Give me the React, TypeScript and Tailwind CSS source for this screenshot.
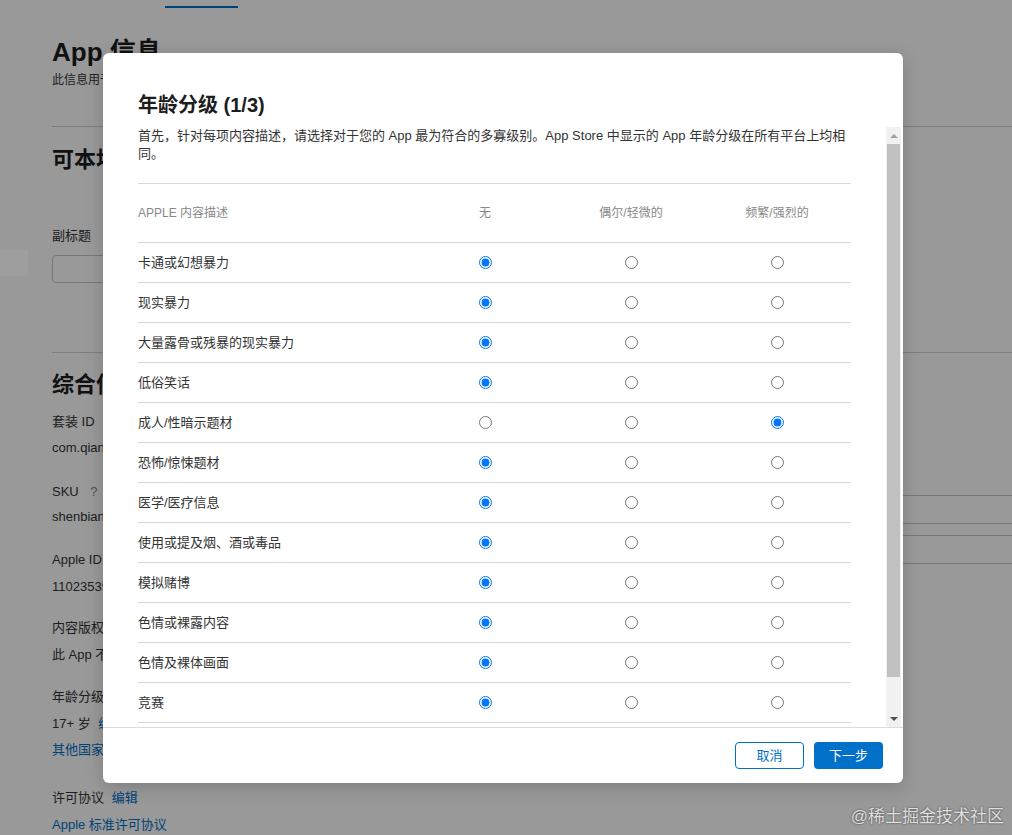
const rows: [string, number][] = [
  ['卡通或幻想暴力', 0],
  ['现实暴力', 0],
  ['大量露骨或残暴的现实暴力', 0],
  ['低俗笑话', 0],
  ['成人/性暗示题材', 2],
  ['恐怖/惊悚题材', 0],
  ['医学/医疗信息', 0],
  ['使用或提及烟、酒或毒品', 0],
  ['模拟赌博', 0],
  ['色情或裸露内容', 0],
  ['色情及裸体画面', 0],
  ['竞赛', 0],
];

const levels = ['无', '偶尔/轻微的', '频繁/强烈的'];

const Field = ({ label, value, top, gap }: { label: React.ReactNode; value: React.ReactNode; top: string; gap: string }) => (
  <div className={top}>
    <p className="text-[13px] leading-[18px]">{label}</p>
    <p className={`${gap} text-[13px] leading-[18px]`}>{value}</p>
  </div>
);

const Page = () => (
  <div className="w-full">
    <div className="flex h-[8px] items-end bg-white pl-[165px]">
      <div className="h-[2px] w-[73px] bg-[#0070c9]" />
    </div>
    <div className="pl-[52px]">
      <h1 className="mt-[28px] text-[26px] font-semibold leading-[32px]">App 信息</h1>
      <p className="mt-[4px] text-[12px] leading-[16px] text-[#333]">此信息用于所有平台上的 App。</p>
      <div className="mt-[38px] border-t border-[#d2d2d7]" />
      <h2 className="mt-[19px] text-[22px] font-semibold leading-[28px]">可本地化信息</h2>
      <p className="mt-[53px] text-[13px] leading-[18px] text-[#333]">副标题</p>
      <div className="mt-[10px] h-[28px] w-[400px] rounded-[4px] border border-[#c8c8cc]" />
      <div className="mt-[69px] border-t border-[#d2d2d7]" />
      <h2 className="mt-[18px] text-[22px] font-semibold leading-[28px]">综合信息</h2>
      <div className="flex">
        <div className="w-[440px] text-[#333]">
          <Field top="mt-[14px]" gap="mt-[8px]" label="套装 ID" value="com.qianmo.shenbian" />
          <Field
            top="mt-[26px]"
            gap="mt-[7px]"
            label={
              <>
                SKU <span className="ml-[8px] text-[#888]">?</span>
              </>
            }
            value="shenbianapp"
          />
          <Field top="mt-[25px]" gap="mt-[9px]" label="Apple ID" value="1102353987" />
          <Field top="mt-[23px]" gap="mt-[9px]" label="内容版权" value="此 App 不含第三方内容。" />
          <Field
            top="mt-[24px]"
            gap="mt-[9px]"
            label="年龄分级"
            value={
              <>
                17+ 岁 <span className="ml-[4px] text-[#0070c9]">编辑</span>
              </>
            }
          />
          <p className="mt-[8px] text-[13px] leading-[18px] text-[#0070c9]">其他国家或地区的年龄分级</p>
          <p className="mt-[30px] text-[13px] leading-[18px]">
            许可协议 <span className="ml-[4px] text-[#0070c9]">编辑</span>
          </p>
          <p className="mt-[9px] text-[13px] leading-[18px] text-[#0070c9]">Apple 标准许可协议</p>
        </div>
        <div className="flex-1">
          <div className="mt-[96px] h-[29px] rounded-l-[4px] border border-r-0 border-[#c8c8cc]" />
          <div className="mt-[11px] h-[29px] rounded-l-[4px] border border-r-0 border-[#c8c8cc]" />
        </div>
      </div>
    </div>
  </div>
);

const ScrollBar = () => (
  <div className="flex w-[15px] flex-col bg-[#f1f1f1]">
    <div className="flex h-[17px] items-center justify-center">
      <div className="h-0 w-0 border-x-[4px] border-b-[4px] border-x-transparent border-b-[#a3a3a3]" />
    </div>
    <div className="flex-1 px-[1px]">
      <div className="h-[533px] bg-[#c1c1c1]" />
    </div>
    <div className="flex h-[17px] items-center justify-center">
      <div className="h-0 w-0 border-x-[4px] border-t-[4px] border-x-transparent border-t-[#505050]" />
    </div>
  </div>
);

const Modal = () => (
  <div className="absolute left-[103px] top-[53px] flex h-[730px] w-[800px] flex-col rounded-[6px] bg-white shadow-[0_4px_18px_rgba(0,0,0,0.18)]">
    <div className="h-[74px] pl-[35px] pt-[38px]">
      <h2 className="text-[20px] font-bold leading-[28px] text-[#1d1d1f]">年龄分级 (1/3)</h2>
    </div>
    <div className="mr-[2px] flex h-[600px]">
      <div className="flex-1 overflow-hidden px-[35px]">
        <p className="text-[13px] leading-[18px] text-[#333]">
          首先，针对每项内容描述，请选择对于您的 App 最为符合的多寡级别。App Store 中显示的 App 年龄分级在所有平台上均相同。
        </p>
        <div className="mt-[20px] w-[713px] border-t border-[#d8d8d8]">
          <div className="grid h-[59px] grid-cols-[274px_146px_146px_146px] items-center border-b border-[#d8d8d8] text-[12px] text-[#888]">
            <span>APPLE 内容描述</span>
            {levels.map((l) => (
              <span key={l} className="text-center">
                {l}
              </span>
            ))}
          </div>
          {rows.map(([label, sel], i) => (
            <div
              key={label}
              className="grid h-[40px] grid-cols-[274px_146px_146px_146px] items-center border-b border-[#d8d8d8] text-[13px] text-[#333]"
            >
              <span>{label}</span>
              {levels.map((l, j) => (
                <div key={l} className="flex justify-center">
                  <input type="radio" name={`r${i}`} defaultChecked={sel === j} className="m-0 h-[13px] w-[13px]" />
                </div>
              ))}
            </div>
          ))}
        </div>
      </div>
      <ScrollBar />
    </div>
    <div className="flex h-[56px] justify-end gap-[10px] border-t border-[#dcdcdc] pr-[20px] pt-[14px]">
      <button className="h-[27px] w-[69px] rounded-[4px] border border-[#0070c9] bg-white text-[13px] text-[#0070c9]">
        取消
      </button>
      <button className="h-[27px] w-[69px] rounded-[4px] bg-[#0070c9] text-[13px] text-white">下一步</button>
    </div>
  </div>
);

export default function App() {
  return (
    <div className="relative h-[835px] w-full overflow-hidden bg-white font-['Liberation_Sans','Noto_Sans_CJK_SC',sans-serif] text-[#1d1d1f]">
      <Page />
      <div className="absolute inset-0 bg-black/40" />
      <div className="absolute left-0 top-[250px] h-[26px] w-[28px] bg-white/5" />
      <Modal />
      <div className="absolute bottom-[6px] right-[8px] text-[17px] leading-[24px] text-[#e0e0e0] [text-shadow:0_0_2px_rgba(0,0,0,0.7)]">
        @稀土掘金技术社区
      </div>
    </div>
  );
}
